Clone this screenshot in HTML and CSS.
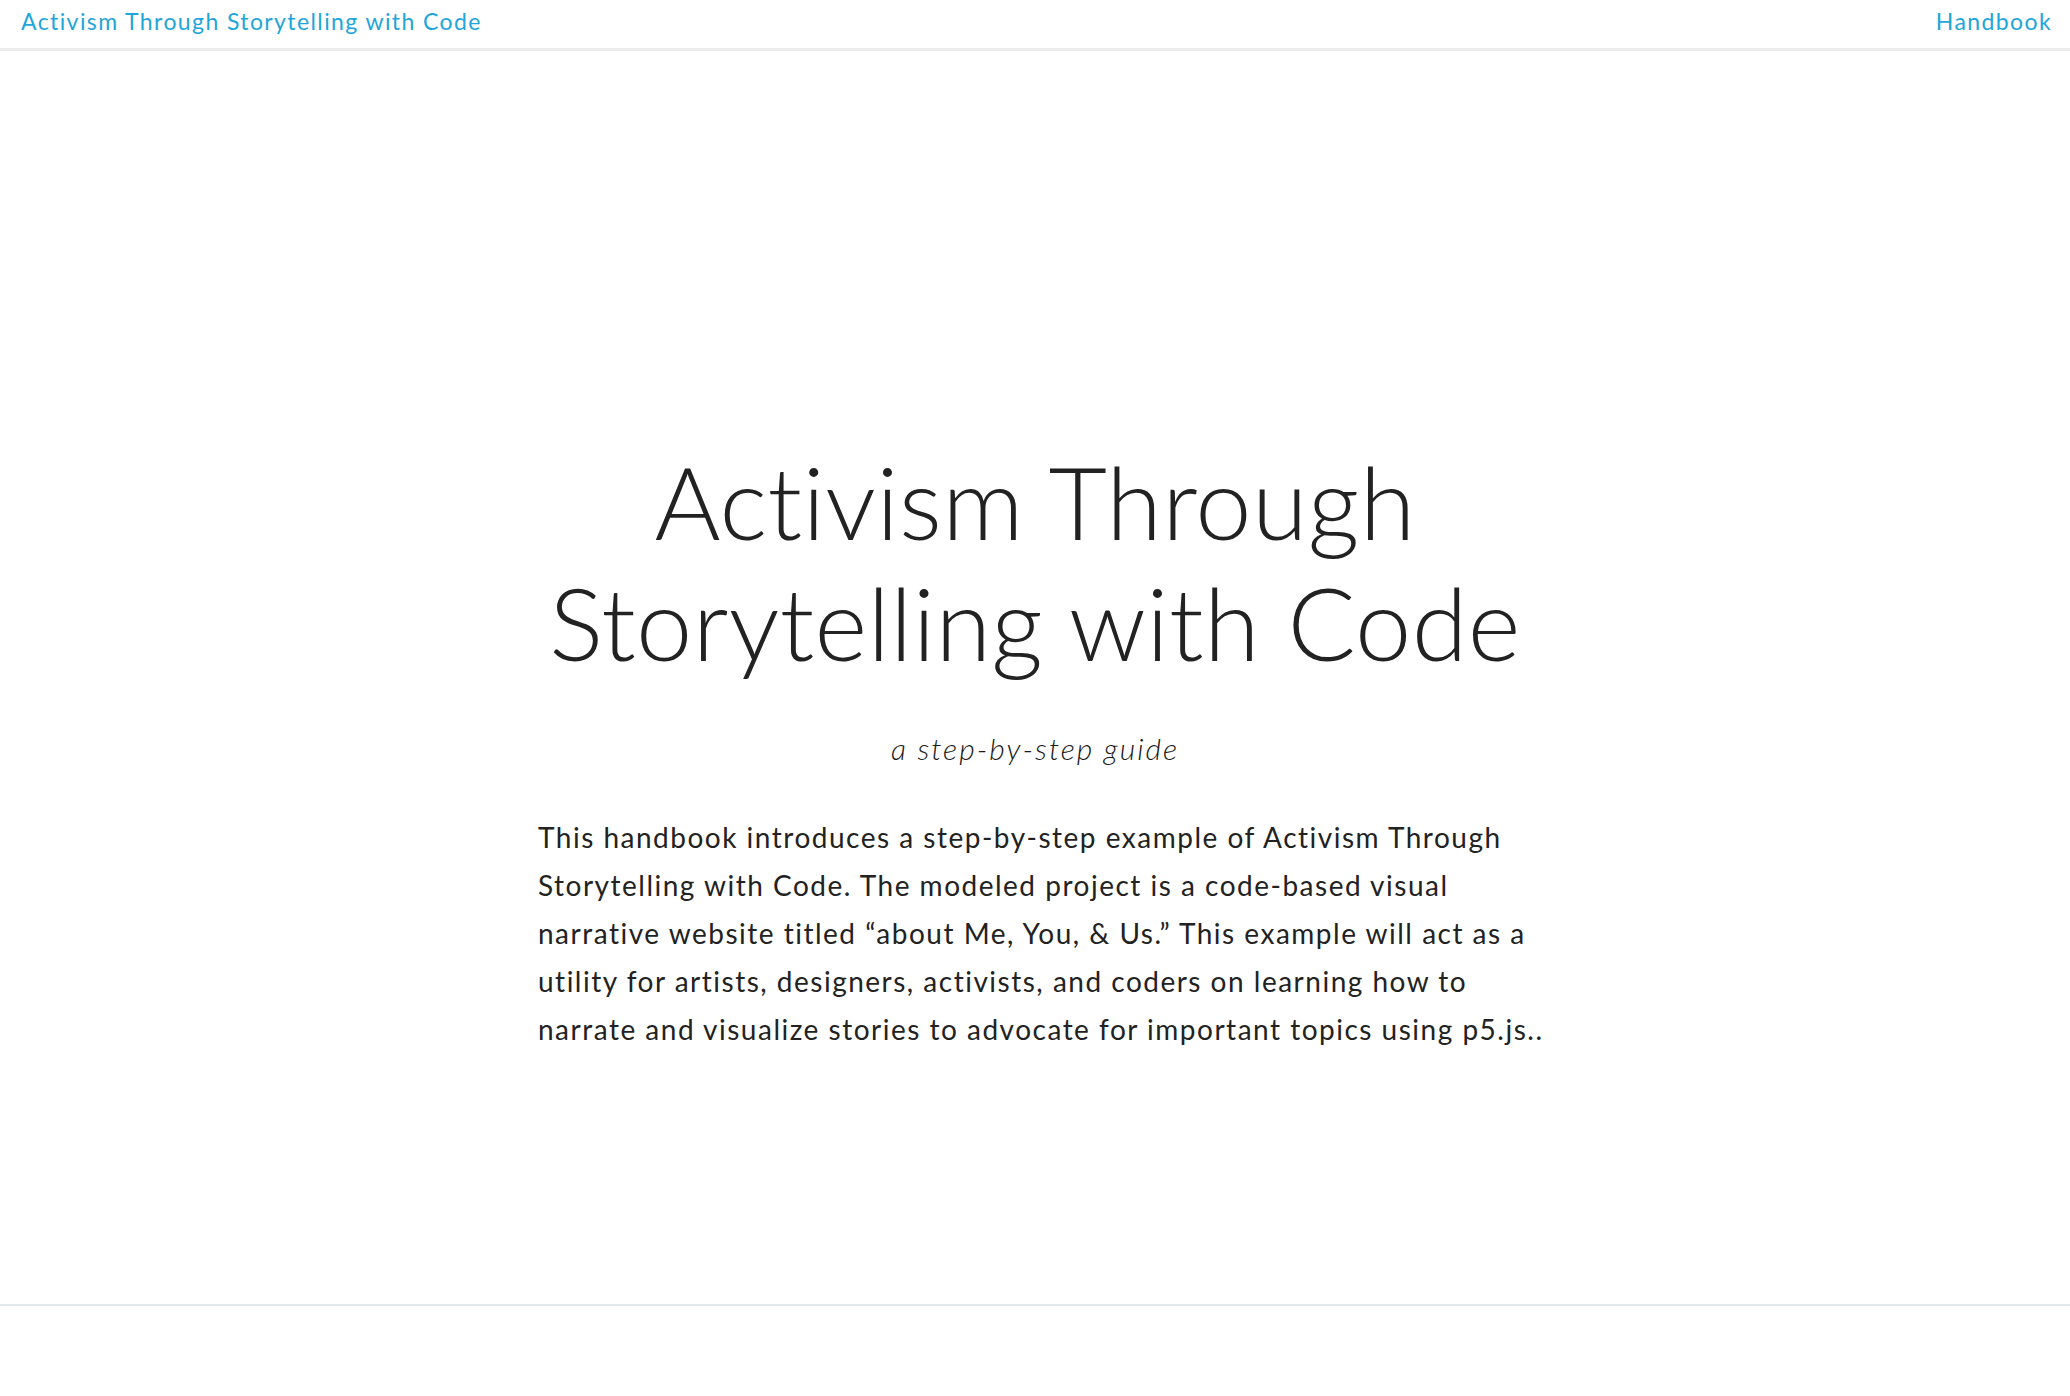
FILE: index.html
```html
<!DOCTYPE html>
<html lang="en">
<head>
<meta charset="utf-8">
<title>Activism Through Storytelling with Code</title>
<link rel="stylesheet" href="styles.css">
</head>
<body>
<header class="topbar">
  <a class="brand" href="#">Activism Through Storytelling with Code</a>
  <a class="navlink" href="#">Handbook</a>
</header>
<main class="hero">
  <div class="hero-inner">
    <h1 class="title">Activism Through<br>Storytelling with Code</h1>
    <p class="subtitle">a step-by-step guide</p>
    <p class="intro">This handbook introduces a step-by-step example of Activism Through Storytelling with Code. The modeled project is a code-based visual narrative website titled “about Me, You, &amp; Us.” This example will act as a utility for artists, designers, activists, and coders on learning how to narrate and visualize stories to advocate for important topics using p5.js..</p>
  </div>
</main>
<footer class="footer"></footer>
</body>
</html>
```

FILE: styles.css
```css
html, body {
  margin: 0;
  padding: 0;
  background: #ffffff;
}
body {
  font-family: Lato, "Open Sans", sans-serif;
  color: #222222;
}
.topbar {
  height: 51px;
  box-sizing: border-box;
  border-bottom: 3px solid #ececec;
  display: flex;
  align-items: center;
  justify-content: space-between;
  padding: 0 18px 6px 21px;
}
.brand, .navlink {
  font-family: Lato, sans-serif;
  font-size: 23px;
  letter-spacing: 1.4px;
  color: #1ea6da;
  text-decoration: none;
  font-weight: 400;
}
.hero {
  height: 1255px;
  border-bottom: 2px solid #e6e9ec;
  box-sizing: border-box;
  padding-top: 390px;
}
.hero-inner {
  width: 1000px;
  margin: 0 auto;
}
.title {
  margin: 0;
  text-align: center;
  font-family: Lato, sans-serif;
  font-weight: 300;
  font-size: 101px;
  line-height: 121px;
  letter-spacing: 0.3px;
  color: #222222;
}
.subtitle {
  margin: 44px 0 0;
  text-align: center;
  font-style: italic;
  font-weight: 300;
  font-size: 30px;
  letter-spacing: 2px;
  line-height: 42px;
  color: #1a1a1a;
}
.intro {
  margin: 44px -20px 0 3px;
  font-size: 28px;
  line-height: 48px;
  letter-spacing: 1.5px;
  font-weight: 400;
  color: #222222;
}
.footer {
  height: 90px;
}
```
